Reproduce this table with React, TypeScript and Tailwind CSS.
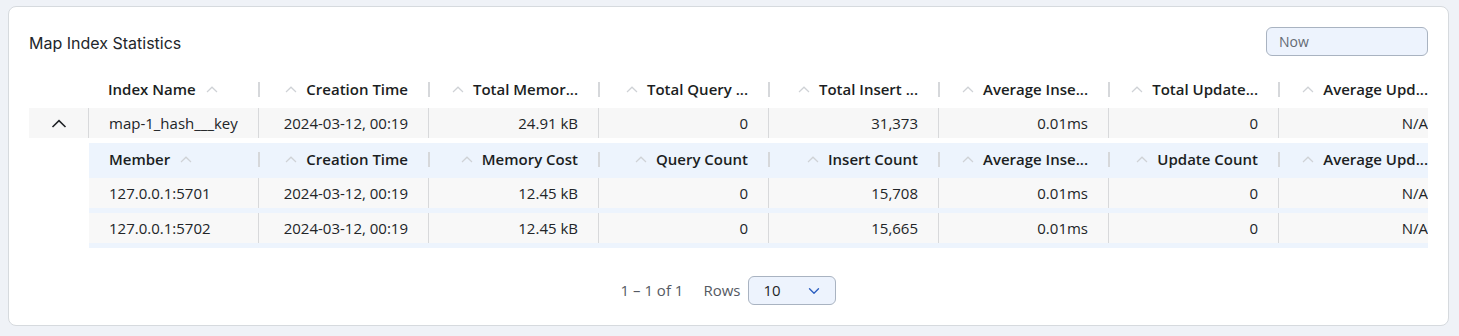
import { ChevronDown } from "lucide-react";

const body = { fontFamily: '"Open Sans", "Noto Sans", sans-serif' };

interface Col {
  label: string;
  align: "left" | "right";
}

// labels as the table shows them once squeezed into 170px columns
const parentCols: Col[] = [
  { label: "Index Name", align: "left" },
  { label: "Creation Time", align: "right" },
  { label: "Total Memor...", align: "right" },
  { label: "Total Query ...", align: "right" },
  { label: "Total Insert ...", align: "right" },
  { label: "Average Inse...", align: "right" },
  { label: "Total Update...", align: "right" },
  { label: "Average Upd...", align: "right" },
];

const memberCols: Col[] = [
  { label: "Member", align: "left" },
  { label: "Creation Time", align: "right" },
  { label: "Memory Cost", align: "right" },
  { label: "Query Count", align: "right" },
  { label: "Insert Count", align: "right" },
  { label: "Average Inse...", align: "right" },
  { label: "Update Count", align: "right" },
  { label: "Average Upd...", align: "right" },
];

const parentRow = ["map-1_hash___key", "2024-03-12, 00:19", "24.91 kB", "0", "31,373", "0.01ms", "0", "N/A"];

const memberRows = [
  ["127.0.0.1:5701", "2024-03-12, 00:19", "12.45 kB", "0", "15,708", "0.01ms", "0", "N/A"],
  ["127.0.0.1:5702", "2024-03-12, 00:19", "12.45 kB", "0", "15,665", "0.01ms", "0", "N/A"],
];

function SortIcon() {
  return (
    <svg width="12" height="7" viewBox="0 0 12 7" className="shrink-0" fill="none">
      <path d="M1 6L6 1.2L11 6" stroke="#cfd2d6" strokeWidth="1.2" />
    </svg>
  );
}

function HeaderCell({ col, first, width }: { col: Col; first: boolean; width: string }) {
  return (
    <div className={`flex h-full shrink-0 items-center ${width}`}>
      {!first && <span className="h-[15px] w-[2px] shrink-0 bg-[#d6d8db]" />}
      {col.align === "left" ? (
        <div className="flex flex-1 items-center gap-[10px] whitespace-nowrap pl-5 pr-5">
          <span>{col.label}</span>
          <SortIcon />
        </div>
      ) : (
        <div className="flex flex-1 items-center justify-end gap-[9px] whitespace-nowrap pl-4 pr-5">
          <SortIcon />
          <span>{col.label}</span>
        </div>
      )}
    </div>
  );
}

function BodyCell({ value, align, border, width }: { value: string; align: "left" | "right"; border: boolean; width: string }) {
  return (
    <div
      className={`flex h-full shrink-0 items-center whitespace-nowrap px-5 ${width} ${border ? "border-l border-[#d8d9db]" : ""} ${
        align === "right" ? "justify-end" : ""
      }`}
    >
      {value}
    </div>
  );
}

export default function App() {
  return (
    <div className="h-[336px] bg-[#eff2f7] pb-[10px] pl-2 pr-[10px] pt-[6px]" style={body}>
      <div className="rounded-lg border border-[#d6dade] bg-white p-5">
        <div className="flex h-[29px] items-center justify-between">
          <h2 className="pt-[2px] text-[16px] text-[#22262b]" style={{ fontFamily: "Inter, sans-serif" }}>
            Map Index Statistics
          </h2>
          <div className="flex h-[29px] w-[162px] items-center rounded-md border border-[#a9b3c1] bg-[#edf3fd] px-3 text-[14px] text-[#646a73]">
            Now
          </div>
        </div>

        <div className="mt-[17px] w-[1399px] overflow-hidden text-[15px] text-[#222528]">
          <div className="w-max">
            <div className="flex h-[35px] pb-[3px] font-semibold text-[#1b1e22]">
              <div className="w-[59px] shrink-0" />
              {parentCols.map((c, i) => (
                <HeaderCell key={c.label} col={c} first={i === 0} width="w-[170px]" />
              ))}
            </div>

            <div className="flex h-[30px] bg-[#f7f7f7]">
              <div className="flex w-[59px] shrink-0 items-center justify-center">
                <svg width="16" height="9" viewBox="0 0 16 9" fill="none">
                  <path d="M1.5 8L8 1.6L14.5 8" stroke="#1f2226" strokeWidth="1.6" />
                </svg>
              </div>
              {parentRow.map((v, i) => (
                <BodyCell key={i} value={v} align={i === 0 ? "left" : "right"} border width="w-[170px]" />
              ))}
            </div>

            <div className="flex pt-[5px]">
              <div className="w-[60px] shrink-0" />
              <div className="bg-[#edf4fd] pb-[5px]">
                <div className="flex h-[35px] pb-[2px] font-semibold text-[#1b1e22]">
                  {memberCols.map((c, i) => (
                    <HeaderCell key={c.label} col={c} first={i === 0} width={i === 0 ? "w-[169px]" : "w-[170px]"} />
                  ))}
                </div>
                <div className="flex flex-col gap-[5px]">
                  {memberRows.map((row) => (
                    <div key={row[0]} className="flex h-[30px] bg-[#f8f8f8]">
                      {row.map((v, i) => (
                        <BodyCell
                          key={i}
                          value={v}
                          align={i === 0 ? "left" : "right"}
                          border={i !== 0}
                          width={i === 0 ? "w-[169px]" : "w-[170px]"}
                        />
                      ))}
                    </div>
                  ))}
                </div>
              </div>
            </div>
          </div>
        </div>

        <div className="mt-[28px] flex items-center justify-center text-[15px]">
          <span className="text-[#555a63]">1 – 1 of 1</span>
          <span className="ml-5 text-[#555a63]">Rows</span>
          <div className="ml-2 flex h-[29px] w-[88px] items-center justify-between rounded-md border border-[#a9b3c1] bg-[#edf3fd] pl-[14px] pr-[12px] text-[#222528]">
            <span>10</span>
            <ChevronDown size={18} strokeWidth={1.8} className="text-[#2d5fc0]" />
          </div>
        </div>
      </div>
    </div>
  );
}
